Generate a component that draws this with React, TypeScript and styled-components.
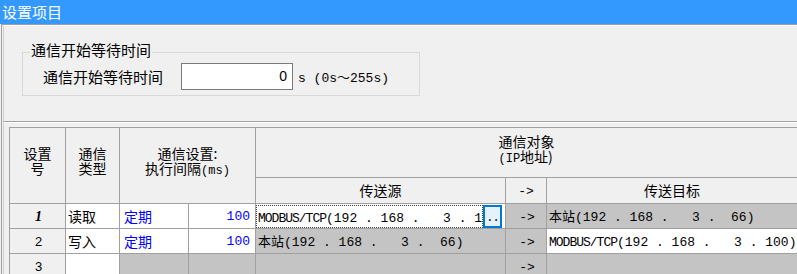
import styled, { createGlobalStyle } from "styled-components";

const MONO = `"Liberation Mono", "Noto Sans CJK SC", monospace`;

const GlobalStyle = createGlobalStyle`
  html, body {
    margin: 0;
    padding: 0;
  }
  body {
    width: 797px;
    height: 274px;
    overflow: hidden;
    background: #f0f0f0;
    color: #000;
    font-family: "Noto Sans CJK SC", "Noto Sans", sans-serif;
  }
`;

type Address = {
  station: "self" | "modbus";
  ip: [string, string, string, string];
};

type Tone = "white" | "gray" | "face";

interface RowData {
  no: string;
  current?: boolean;
  kind?: string;
  mode?: string;
  interval?: string;
  src?: Address;
  dst?: Address;
  focusSrc?: boolean;
}

const rows: RowData[] = [
  {
    no: "1",
    current: true,
    kind: "读取",
    mode: "定期",
    interval: "100",
    src: { station: "modbus", ip: ["192", "168", "3", "100"] },
    dst: { station: "self", ip: ["192", "168", "3", "66"] },
    focusSrc: true,
  },
  {
    no: "2",
    kind: "写入",
    mode: "定期",
    interval: "100",
    src: { station: "self", ip: ["192", "168", "3", "66"] },
    dst: { station: "modbus", ip: ["192", "168", "3", "100"] },
  },
  { no: "3" },
];

const pad = (s: string) => s.padStart(3, " ");

const AddressText = ({ value }: { value: Address }) => {
  const [a, b, c, d] = value.ip;
  return (
    <AddrLine>
      {value.station === "modbus" ? <Proto>MODBUS/TCP</Proto> : "本站"}
      {`(${a} . ${b} . ${pad(c)} . ${pad(d)})`}
    </AddrLine>
  );
};

export default function App() {
  return (
    <>
      <GlobalStyle />
      <Window>
        <TitleBar>设置项目</TitleBar>
        <Body>
          <TopPane>
            <GroupBox>
              <Legend>通信开始等待时间</Legend>
              <FieldRow>
                <FieldLabel>通信开始等待时间</FieldLabel>
                <NumberBox>0</NumberBox>
                <Unit>s (0s～255s)</Unit>
              </FieldRow>
            </GroupBox>
          </TopPane>

          <GridPane>
            <Grid>
              <colgroup>
                <Col $w={56} />
                <Col $w={54} />
                <Col $w={69} />
                <Col $w={67} />
                <Col $w={250} />
                <Col $w={41} />
                <Col $w={251} />
              </colgroup>
              <thead>
                <HeadRow $h={50}>
                  <HeadCell rowSpan={2} $pt={18}>
                    设置
                    <br />号
                  </HeadCell>
                  <HeadCell rowSpan={2} $pt={18}>
                    通信
                    <br />
                    类型
                  </HeadCell>
                  <HeadCell rowSpan={2} colSpan={2} $pt={18}>
                    通信设置:
                    <br />
                    执行间隔<Small>(ms)</Small>
                  </HeadCell>
                  <HeadCell colSpan={3} $pt={6}>
                    <Stack>
                      通信对象
                      <br />
                      <Small>(IP</Small>地址)
                    </Stack>
                  </HeadCell>
                </HeadRow>
                <HeadRow $h={26}>
                  <SubHead>传送源</SubHead>
                  <SubHead>
                    <Arrow>-&gt;</Arrow>
                  </SubHead>
                  <SubHead>传送目标</SubHead>
                </HeadRow>
              </thead>
              <tbody>
                {rows.map((r) => (
                  <DataRow key={r.no}>
                    <Cell $tone="face" $align="center">
                      {r.current ? <CurrentNo>{r.no}</CurrentNo> : <RowNo>{r.no}</RowNo>}
                    </Cell>
                    <Cell $tone="white">{r.kind}</Cell>
                    <Cell $tone={r.mode ? "white" : "gray"} $blue $pl={4}>
                      {r.mode}
                    </Cell>
                    <Cell $tone={r.interval ? "white" : "gray"} $blue $align="right" $mono>
                      {r.interval}
                    </Cell>
                    {r.focusSrc && r.src ? (
                      <Cell $tone="white" $pl={0}>
                        <FocusBox>
                          <FocusText>
                            <AddressText value={r.src} />
                          </FocusText>
                          <EllipsisButton>..</EllipsisButton>
                        </FocusBox>
                      </Cell>
                    ) : (
                      <Cell $tone="gray">{r.src && <AddressText value={r.src} />}</Cell>
                    )}
                    <Cell $tone="gray" $align="center">
                      <Arrow>-&gt;</Arrow>
                    </Cell>
                    <Cell $tone={r.dst?.station === "modbus" ? "white" : "gray"}>
                      {r.dst && <AddressText value={r.dst} />}
                    </Cell>
                  </DataRow>
                ))}
              </tbody>
            </Grid>
          </GridPane>
        </Body>
      </Window>
    </>
  );
}

const Window = styled.div`
  width: 797px;
  height: 274px;
  display: flex;
  flex-direction: column;
`;

const TitleBar = styled.div`
  flex: none;
  height: 24px;
  padding-left: 2px;
  background: #3399ff;
  color: #fff;
  font-size: 15px;
  line-height: 23px;
`;

const Body = styled.div`
  flex: 1;
  min-height: 0;
  margin-left: 1px;
  border-left: 1px solid #a0a0a0;
  border-top: 1px solid #a0a0a0;
  display: flex;
  flex-direction: column;
`;

const TopPane = styled.div`
  flex: none;
  height: 95px;
  margin-left: 1px;
  padding-left: 18px;
  border-left: 1px solid #d0d0d0;
  border-top: 1px solid #fff;
  border-bottom: 1px solid #a0a0a0;
`;

const GroupBox = styled.div`
  width: 398px;
  height: 44px;
  box-sizing: border-box;
  margin-top: 26px;
  border: 1px solid #d8d8d8;
`;

const Legend = styled.div`
  width: fit-content;
  margin: -11px 0 0 7px;
  padding: 0 1px;
  background: #f0f0f0;
  font-size: 15px;
  line-height: 16px;
`;

const FieldRow = styled.div`
  display: flex;
  align-items: center;
  margin-top: 5px;
  padding-left: 20px;
`;

const FieldLabel = styled.div`
  width: 138px;
  font-size: 15px;
`;

const NumberBox = styled.div`
  width: 112px;
  height: 27px;
  box-sizing: border-box;
  padding-right: 5px;
  border: 1px solid #7a7a7a;
  background: #fff;
  text-align: right;
  font-family: "Liberation Sans", sans-serif;
  font-size: 14px;
  line-height: 25px;
`;

const Unit = styled.div`
  margin-left: 5px;
  font-family: ${MONO};
  font-size: 13px;
  white-space: pre;
`;

const GridPane = styled.div`
  flex: 1;
  min-height: 0;
  margin-left: 1px;
  padding: 4px 0 0 5px;
  border-left: 1px solid #d0d0d0;
  border-top: 1px solid #fff;
  overflow: hidden;
`;

const Grid = styled.table`
  width: 788px;
  border-collapse: collapse;
  table-layout: fixed;
  border: 1px solid #808080;
  font-size: 14px;
`;

const Col = styled.col<{ $w: number }>`
  width: ${(p) => p.$w}px;
`;

const HeadRow = styled.tr<{ $h: number }>`
  height: ${(p) => p.$h}px;
`;

const HeadCell = styled.th<{ $pt: number }>`
  padding: ${(p) => p.$pt}px 0 0;
  vertical-align: top;
  border: 1px solid #a0a0a0;
  background: #f0f0f0;
  font-weight: normal;
  line-height: 15px;
  text-align: center;
`;

const SubHead = styled.th`
  padding: 0;
  border: 1px solid #a0a0a0;
  background: #f0f0f0;
  font-weight: normal;
  text-align: center;
  line-height: 15px;
`;

const Stack = styled.span`
  display: inline-block;
  text-align: left;
`;

const Small = styled.span`
  font-family: ${MONO};
  font-size: 12px;
`;

const DataRow = styled.tr`
  height: 25px;
`;

const toneBg: Record<Tone, string> = {
  white: "#ffffff",
  gray: "#c4c4c4",
  face: "#f0f0f0",
};

const Cell = styled.td<{
  $tone: Tone;
  $align?: "left" | "center" | "right";
  $blue?: boolean;
  $mono?: boolean;
  $pl?: number;
}>`
  padding: ${(p) => (p.$mono ? 2 : 0)}px ${(p) => (p.$align === "right" ? 5 : 0)}px 0
    ${(p) => p.$pl ?? 2}px;
  border: 1px solid #a0a0a0;
  background: ${(p) => toneBg[p.$tone]};
  color: ${(p) => (p.$blue ? "#0000ff" : "#000")};
  text-align: ${(p) => p.$align ?? "left"};
  font-family: ${(p) => (p.$mono ? MONO : "inherit")};
  font-size: ${(p) => (p.$mono ? "13px" : "14px")};
  white-space: nowrap;
  overflow: hidden;
  line-height: 16px;
`;

const CurrentNo = styled.span`
  font-family: "Liberation Serif", serif;
  font-style: italic;
  font-weight: bold;
  font-size: 14px;
`;

const RowNo = styled.span`
  font-family: "Liberation Sans", sans-serif;
  font-size: 13px;
`;

const Arrow = styled.span`
  font-family: ${MONO};
  font-size: 13px;
`;

const AddrLine = styled.span`
  font-family: ${MONO};
  font-size: 13px;
  white-space: pre;
`;

const Proto = styled.span`
  letter-spacing: -1px;
`;

const FocusBox = styled.div`
  display: flex;
  align-items: stretch;
  height: 23px;
`;

const FocusText = styled.div`
  flex: 1;
  min-width: 0;
  overflow: hidden;
  padding-left: 1px;
  border: 1px dotted #404040;
  line-height: 21px;
`;

const EllipsisButton = styled.div`
  flex: none;
  width: 19px;
  margin-right: 3px;
  box-sizing: border-box;
  border: 2px solid #0078d7;
  background: #e5f1fb;
  font-family: ${MONO};
  font-size: 12px;
  line-height: 22px;
  text-align: center;
  letter-spacing: -1px;
`;
